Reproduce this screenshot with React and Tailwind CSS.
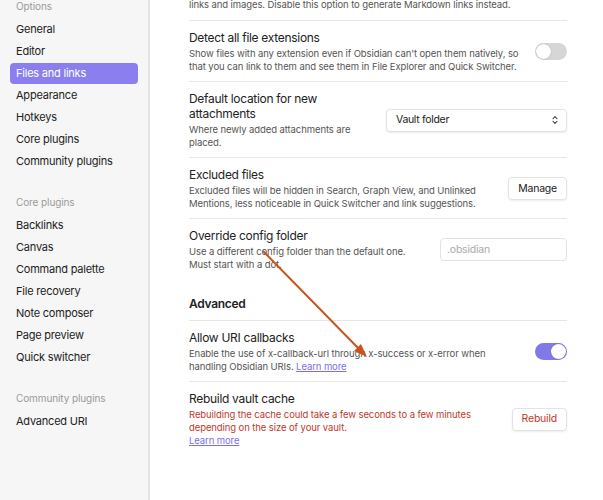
import { ChevronsUpDown } from 'lucide-react'

const font = { fontFamily: 'Inter, "Liberation Sans", sans-serif' }

const options = ['General', 'Editor', 'Files and links', 'Appearance', 'Hotkeys', 'Core plugins', 'Community plugins']
const corePlugins = ['Backlinks', 'Canvas', 'Command palette', 'File recovery', 'Note composer', 'Page preview', 'Quick switcher']

function NavItem({ label, active }) {
  return (
    <div
      className={`mx-[10px] h-[21px] px-[6px] flex items-center rounded-[4px] text-[11px] tracking-[-0.02em] mb-[1px] ${
        active ? 'bg-[#8b7ff0] text-white' : 'text-[#222]'
      }`}
    >
      {label}
    </div>
  )
}

function NavHeader({ children, className = '' }) {
  return (
    <div className={`text-[10px] tracking-[-0.01em] text-[#9a9a9a] px-[16px] h-[13px] leading-[13px] ${className}`}>
      {children}
    </div>
  )
}

function Toggle({ on }) {
  return (
    <div
      className={`w-[32px] h-[17px] rounded-full flex items-center px-[1px] shrink-0 ${
        on ? 'bg-[#8179e8] justify-end' : 'bg-[#d6d6d6] justify-start'
      }`}
    >
      <div className="w-[15px] h-[15px] rounded-full bg-white shadow-[0_0_1px_rgba(0,0,0,0.35)]" />
    </div>
  )
}

function Setting({ title, children, control, border = true }) {
  return (
    <div className={`flex items-center gap-3 pt-[9px] pb-[8px] ${border ? 'border-t border-[#e6e6e6]' : ''}`}>
      <div className="flex-1 min-w-0">
        <div className="text-[12px] tracking-[-0.025em] text-[#222] leading-[15px]">{title}</div>
        <div className="text-[9.5px] tracking-[-0.01em] text-[#555] leading-[13px] mt-[2px] whitespace-nowrap">
          {children}
        </div>
      </div>
      {control}
    </div>
  )
}

const Button = ({ children, red }) => (
  <div
    className={`h-[23px] px-[9px] flex items-center rounded-[4px] bg-white border border-[#e3e3e3] shadow-[0_1px_2px_rgba(0,0,0,0.08)] text-[10.5px] tracking-[-0.02em] shrink-0 ${
      red ? 'text-[#c0392b]' : 'text-[#222]'
    }`}
  >
    {children}
  </div>
)

export default function App() {
  return (
    <div className="relative w-[603px] h-[500px] flex bg-white overflow-hidden" style={font}>
      {/* Sidebar */}
      <div className="w-[150px] h-full bg-[#f6f6f6] border-r-[2px] border-[#e4e4e4] shrink-0">
        <NavHeader>Options</NavHeader>
        <div className="mt-[6px]">
          {options.map(o => (
            <NavItem key={o} label={o} active={o === 'Files and links'} />
          ))}
        </div>
        <NavHeader className="mt-[24px]">Core plugins</NavHeader>
        <div className="mt-[6px]">
          {corePlugins.map(o => (
            <NavItem key={o} label={o} />
          ))}
        </div>
        <NavHeader className="mt-[24px]">Community plugins</NavHeader>
        <div className="mt-[6px]">
          <NavItem label="Advanced URI" />
        </div>
      </div>

      {/* Content */}
      <div className="flex-1 pl-[39px] pr-[36px]">
        <div className="text-[9.5px] tracking-[-0.01em] text-[#555] leading-[13px] -mt-[2px] pb-[9px] whitespace-nowrap">
          links and images. Disable this option to generate Markdown links instead.
        </div>

        <Setting title="Detect all file extensions" control={<Toggle />}>
          Show files with any extension even if Obsidian can't open them natively, so<br />
          that you can link to them and see them in File Explorer and Quick Switcher.
        </Setting>

        <Setting
          title={<>Default location for new<br />attachments</>}
          control={
            <div className="w-[181px] h-[23px] shrink-0 rounded-[4px] bg-white border border-[#e3e3e3] shadow-[0_1px_2px_rgba(0,0,0,0.08)] flex items-center justify-between pl-[9px] pr-[6px] text-[10.5px] tracking-[-0.03em] text-[#222]">
              Vault folder
              <ChevronsUpDown size={10} strokeWidth={2.5} className="text-[#333]" />
            </div>
          }
        >
          Where newly added attachments are<br />placed.
        </Setting>

        <Setting title="Excluded files" control={<Button>Manage</Button>}>
          Excluded files will be hidden in Search, Graph View, and Unlinked<br />
          Mentions, less noticeable in Quick Switcher and link suggestions.
        </Setting>

        <Setting
          title="Override config folder"
          control={
            <div className="w-[127px] h-[23px] shrink-0 rounded-[4px] bg-white border border-[#e3e3e3] flex items-center px-[6px] text-[10.5px] tracking-[-0.02em] text-[#aaa]">
              .obsidian
            </div>
          }
        >
          Use a different config folder than the default one.<br />Must start with a dot.
        </Setting>

        <div className="text-[12px] tracking-[-0.025em] font-semibold text-[#222] leading-[15px] mt-[17px] pb-[9px]">
          Advanced
        </div>

        <Setting title="Allow URI callbacks" control={<Toggle on />}>
          Enable the use of x-callback-url through x-success or x-error when<br />
          handling Obsidian URIs.{' '}
          <span className="text-[#7b6ff0] underline">Learn more</span>
        </Setting>

        <Setting title="Rebuild vault cache" control={<Button red>Rebuild</Button>}>
          <span className="text-[#c0392b]">
            Rebuilding the cache could take a few seconds to a few minutes<br />
            depending on the size of your vault.
          </span>
          <br />
          <span className="text-[#7b6ff0] underline">Learn more</span>
        </Setting>
      </div>

      {/* Annotation arrow */}
      <svg className="absolute left-0 top-0 pointer-events-none" width="603" height="500">
        <line x1="263" y1="251" x2="362" y2="352" stroke="#c9531c" strokeWidth="2" />
        <polygon points="367,357 354,351 361,344" fill="#c9531c" />
      </svg>
    </div>
  )
}
